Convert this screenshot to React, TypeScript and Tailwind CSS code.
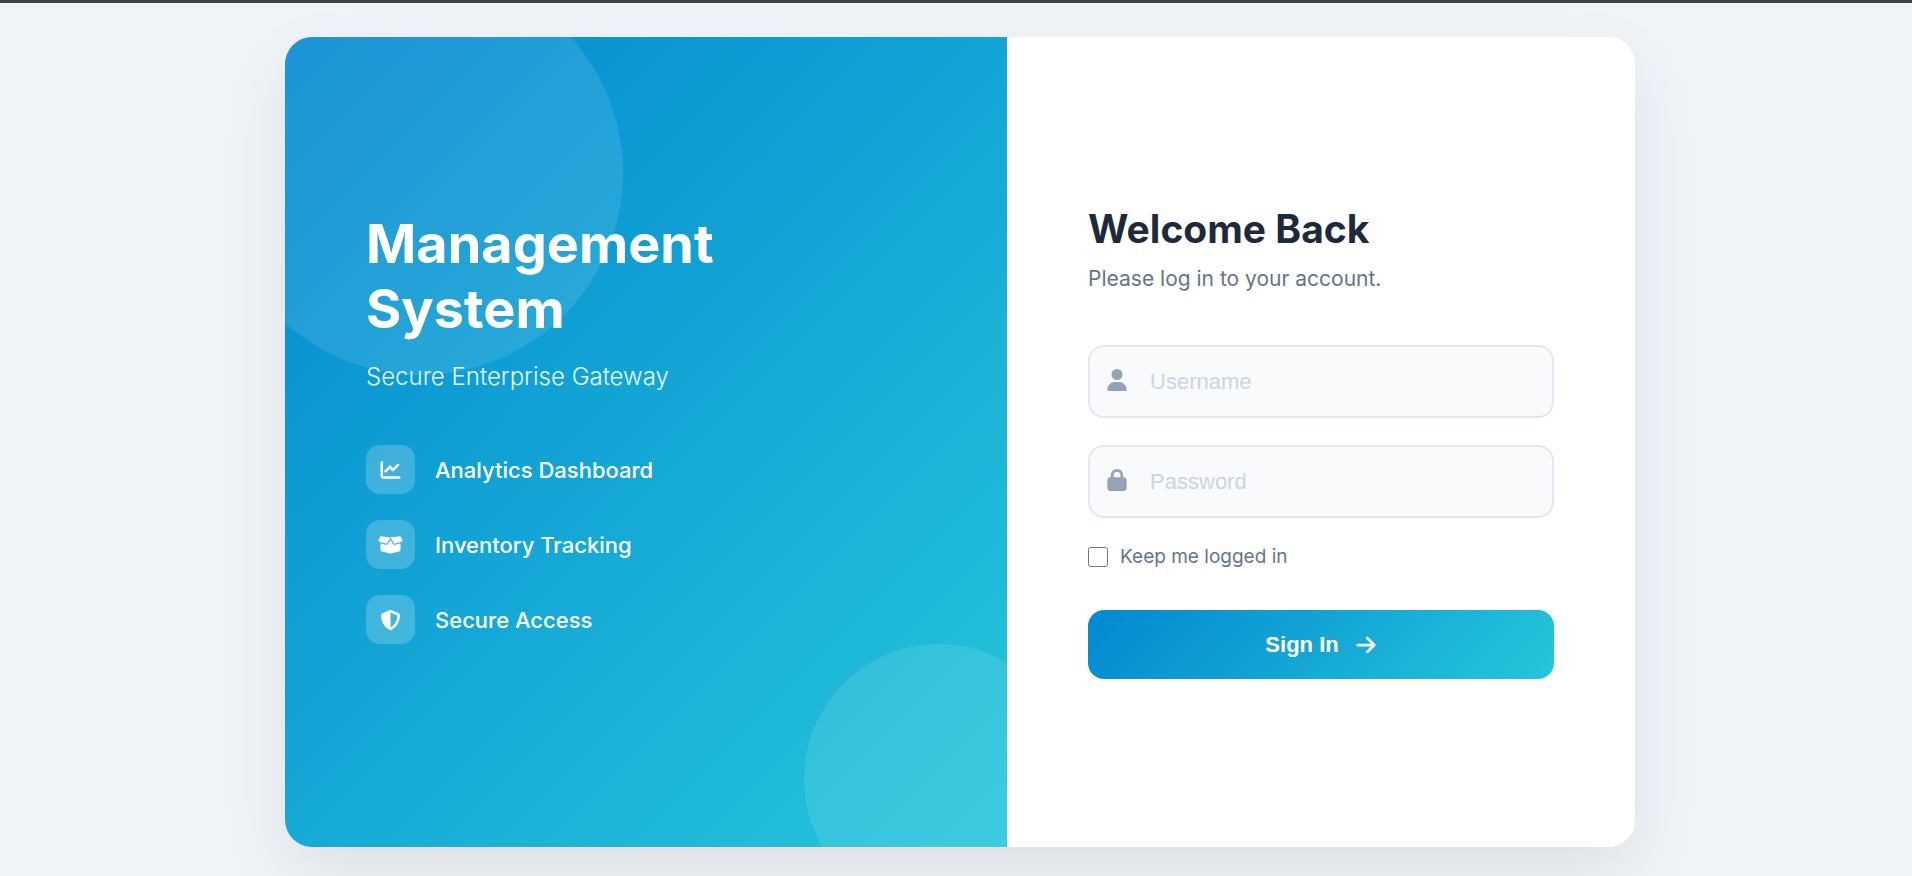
import { useState } from "react";
import type { IconType } from "react-icons";
import {
  FaArrowRight,
  FaBoxOpen,
  FaChartLine,
  FaLock,
  FaShieldHalved,
  FaUser,
} from "react-icons/fa6";

const features = [
  { label: "Analytics Dashboard", icon: FaChartLine },
  { label: "Inventory Tracking", icon: FaBoxOpen },
  { label: "Secure Access", icon: FaShieldHalved },
];

function BrandPanel() {
  return (
    <section className="relative overflow-hidden flex flex-col justify-center px-6 py-12 lg:px-[81px] bg-[linear-gradient(135deg,#0288d1,#26c6da)] text-white">
      {/* Decorative circles */}
      <div className="absolute -top-[67px] -left-[67px] size-[405px] rounded-full bg-white/10 pointer-events-none" />
      <div className="absolute -bottom-[67px] -right-[67px] size-[270px] rounded-full bg-white/10 pointer-events-none" />

      <div className="relative">
        <h1 className="text-[54px] leading-[65px] font-bold">
          Management <br />
          System
        </h1>
        <p className="mt-5 text-2xl font-light text-white/90">Secure Enterprise Gateway</p>

        <ul className="mt-[52px] mb-[29px] space-y-[26px]">
          {features.map(({ label, icon: Icon }) => (
            <li key={label} className="flex items-center gap-5 text-[22px] leading-8 font-medium">
              <span className="flex size-[49px] items-center justify-center rounded-[14px] bg-white/20">
                <Icon className="h-5 w-[25px]" />
              </span>
              {label}
            </li>
          ))}
        </ul>
      </div>
    </section>
  );
}

type FieldProps = {
  id: string;
  type: string;
  label: string;
  icon: IconType;
};

function Field({ id, type, label, icon: Icon }: FieldProps) {
  return (
    <div className="relative mb-[27px]">
      <Icon className="absolute left-[18px] top-6 size-[22px] text-[#94a3b8] pointer-events-none" />
      <input
        id={id}
        type={type}
        aria-label={label}
        placeholder={label}
        className="block w-full h-[73px] rounded-2xl border-2 border-[#e2e8f0] bg-[#f8fafc] pl-[60px] pr-5 font-['Liberation_Sans',Arial,sans-serif] text-[22px] text-[#1e293b] placeholder:text-[#cbd5e1] outline-none focus:border-[#0288d1]"
      />
    </div>
  );
}

function LoginForm() {
  const [remember, setRemember] = useState(false);

  return (
    <section className="flex flex-col justify-center px-6 py-12 lg:px-[81px] bg-white">
      <h2 className="text-[39px] leading-[48px] font-bold text-[#1e293b]">Welcome Back</h2>
      <p className="mt-3 text-[21px] leading-7 text-[#64748b]">Please log in to your account.</p>

      <form className="mt-[52px]" onSubmit={(e) => e.preventDefault()}>
        <Field id="username" type="text" label="Username" icon={FaUser} />
        <Field id="password" type="password" label="Password" icon={FaLock} />

        <label className="flex w-fit items-center gap-3 text-[19px] leading-6 text-[#64748b]">
          <input
            type="checkbox"
            checked={remember}
            onChange={(e) => setRemember(e.target.checked)}
            className="size-5"
          />
          Keep me logged in
        </label>

        <button
          type="submit"
          className="mt-[41px] flex h-[69px] w-full items-center justify-center gap-4 rounded-2xl bg-[linear-gradient(135deg,#0288d1,#26c6da)] font-['Liberation_Sans',Arial,sans-serif] text-[22px] font-bold text-white cursor-pointer"
        >
          Sign In
          <FaArrowRight className="size-[22px]" />
        </button>
      </form>
    </section>
  );
}

export default function App() {
  return (
    <div className="min-h-screen border-t-3 border-[#3b4345] bg-[#f0f4f9] pl-8 pr-6 pt-[34px] pb-7 font-[Inter,sans-serif]">
      <main className="mx-auto grid w-full max-w-[1350px] lg:min-h-[810px] lg:grid-cols-[1.15fr_1fr] overflow-hidden rounded-[27px] bg-white shadow-[0_27px_68px_rgba(0,0,0,0.08)]">
        <BrandPanel />
        <LoginForm />
      </main>
    </div>
  );
}
